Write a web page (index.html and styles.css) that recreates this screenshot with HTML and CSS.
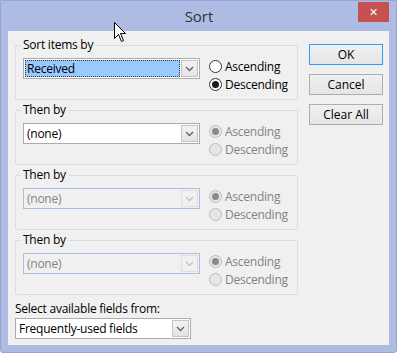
FILE: index.html
```html
<!DOCTYPE html>
<html lang="en">
<head>
    <meta charset="UTF-8">
    <title>Sort</title>
    <link rel="stylesheet" href="styles.css">
</head>
<body>
    <div class="window">
        <div class="titlebar">
            <span></span>
            <span class="title">Sort</span>
            <button class="close">&#x2715;</button>
        </div>
        <div class="client">
            <div class="fields">
                <fieldset class="group">
                    <legend>Sort items by</legend>
                    <div class="combo focus">
                        <span class="value">Received</span>
                        <span class="arrow"><svg width="9" height="6" viewBox="0 0 9 6"><polyline points="1,1 4.5,4.5 8,1" /></svg></span>
                    </div>
                    <div class="order">
                        <label class="radio"><span class="dot"></span>Ascending</label>
                        <label class="radio checked"><span class="dot"></span>Descending</label>
                    </div>
                </fieldset>
                <fieldset class="group">
                    <legend>Then by</legend>
                    <div class="combo">
                        <span class="value">(none)</span>
                        <span class="arrow"><svg width="9" height="6" viewBox="0 0 9 6"><polyline points="1,1 4.5,4.5 8,1" /></svg></span>
                    </div>
                    <div class="order disabled">
                        <label class="radio checked"><span class="dot"></span>Ascending</label>
                        <label class="radio"><span class="dot"></span>Descending</label>
                    </div>
                </fieldset>
                <fieldset class="group">
                    <legend>Then by</legend>
                    <div class="combo disabled">
                        <span class="value">(none)</span>
                        <span class="arrow"><svg width="9" height="6" viewBox="0 0 9 6"><polyline points="1,1 4.5,4.5 8,1" /></svg></span>
                    </div>
                    <div class="order disabled">
                        <label class="radio checked"><span class="dot"></span>Ascending</label>
                        <label class="radio"><span class="dot"></span>Descending</label>
                    </div>
                </fieldset>
                <fieldset class="group">
                    <legend>Then by</legend>
                    <div class="combo disabled">
                        <span class="value">(none)</span>
                        <span class="arrow"><svg width="9" height="6" viewBox="0 0 9 6"><polyline points="1,1 4.5,4.5 8,1" /></svg></span>
                    </div>
                    <div class="order disabled">
                        <label class="radio checked"><span class="dot"></span>Ascending</label>
                        <label class="radio"><span class="dot"></span>Descending</label>
                    </div>
                </fieldset>
                <div class="caption">Select available fields from:</div>
                <div class="combo source">
                    <span class="value">Frequently-used fields</span>
                    <span class="arrow"><svg width="9" height="6" viewBox="0 0 9 6"><polyline points="1,1 4.5,4.5 8,1" /></svg></span>
                </div>
            </div>
            <div class="buttons">
                <button class="button default">OK</button>
                <button class="button">Cancel</button>
                <button class="button">Clear All</button>
            </div>
        </div>
        <!-- mouse pointer over the title bar -->
        <svg class="cursor" width="13" height="21" viewBox="0 0 13 21">
            <path d="M0.5,0.5 L0.5,16.5 L4.5,12.5 L7.5,19.5 L9.5,18.5 L6.5,11.5 L11.5,11.5 Z" />
        </svg>
    </div>
</body>
</html>
```

FILE: styles.css
```css
* {
    box-sizing: border-box;
}
body {
    margin: 0;
    font-family: "Open Sans", "Liberation Sans", sans-serif;
    font-size: 12px;
    letter-spacing: -0.25px;
    color: #000;
}
.window {
    position: relative;
    width: 397px;
    height: 353px;
    background-color: #aebbe3;
    border: 1px solid #95a5d4;
    border-radius: 0 0 3px 3px;
    padding: 0 7px 7px;
    display: flex;
    flex-direction: column;
}
.titlebar {
    height: 30px;
    display: grid;
    grid-template-columns: 1fr auto 1fr;
    align-items: center;
}
.titlebar .title {
    font-size: 15px;
    letter-spacing: 0;
    color: #333;
    padding-left: 1px;
}
.titlebar .close {
    justify-self: end;
    align-self: start;
    margin-top: 1px;
    width: 31px;
    height: 20px;
    border: 0;
    padding: 0;
    background-color: #c75050;
    color: #fff;
    font-size: 11px;
    font-weight: bold;
    font-family: "DejaVu Sans", sans-serif;
}
.client {
    flex: 1;
    background-color: #f0f0f0;
    padding: 6px 6px 0 7px;
    display: flex;
    gap: 11px;
}
.fields {
    width: 284px;
    display: flex;
    flex-direction: column;
}
.group {
    margin: 0 0 2px;
    padding: 4px 6px 6px 7px;
    border: 1px solid #dcdcdc;
    border-radius: 2px;
    min-width: 0;
    display: flex;
    align-items: flex-start;
}
.group legend {
    padding: 0 2px;
    margin-left: -2px;
    line-height: 16px;
}
.combo {
    width: 177px;
    height: 21px;
    margin-top: 1px;
    border: 1px solid #acacac;
    background-color: #fff;
    display: flex;
}
.combo .value {
    flex: 1;
    padding-left: 3px;
    line-height: 19px;
}
.combo .arrow {
    width: 17px;
    margin: 1px;
    border: 1px solid #c4c4c4;
    background: linear-gradient(#f3f3f3, #e4e4e4);
    display: flex;
    align-items: center;
    justify-content: center;
}
.combo .arrow svg {
    fill: none;
    stroke: #606060;
    stroke-width: 1.3;
}
.combo.focus .value {
    margin: 1px 0 1px 1px;
    padding-left: 2px;
    line-height: 17px;
    background-color: #99c9ff;
    outline: 1px dotted #333;
    outline-offset: -1px;
}
.combo.disabled {
    border-color: #a8bfe0;
    background-color: #f0f0f0;
    color: #838383;
}
.combo.disabled .arrow {
    border-color: #dedede;
    background: #f0f0f0;
}
.combo.disabled .arrow svg {
    stroke: #c2c2c2;
}
.order {
    margin-left: 9px;
    display: flex;
    flex-direction: column;
}
.radio {
    height: 18px;
    display: flex;
    align-items: center;
    gap: 3px;
}
.radio .dot {
    width: 13px;
    height: 13px;
    border: 1px solid #333;
    border-radius: 50%;
    background-color: #fff;
    display: flex;
    align-items: center;
    justify-content: center;
}
.radio.checked .dot::after {
    content: '';
    width: 7px;
    height: 7px;
    border-radius: 50%;
    background-color: #1a1a1a;
}
.order.disabled {
    color: #838383;
}
.order.disabled .dot {
    border-color: #bcbcbc;
    background-color: #e6e6e6;
}
.order.disabled .checked .dot::after {
    background-color: #8a8a8a;
}
.caption {
    margin-top: 4px;
    line-height: 16px;
}
.combo.source {
    width: 176px;
    margin-top: 1px;
}
.buttons {
    margin-top: 7px;
    display: flex;
    flex-direction: column;
    gap: 9px;
}
.button {
    width: 74px;
    height: 21px;
    padding: 0;
    border: 1px solid #adadad;
    background: linear-gradient(#f0f0f0, #e5e5e5);
    font-family: inherit;
    font-size: 12px;
    color: #000;
}
.button.default {
    border-color: #3399ff;
}
.cursor {
    position: absolute;
    left: 113px;
    top: 21px;
    fill: #fff;
    stroke: #000;
    stroke-width: 1;
}
```
